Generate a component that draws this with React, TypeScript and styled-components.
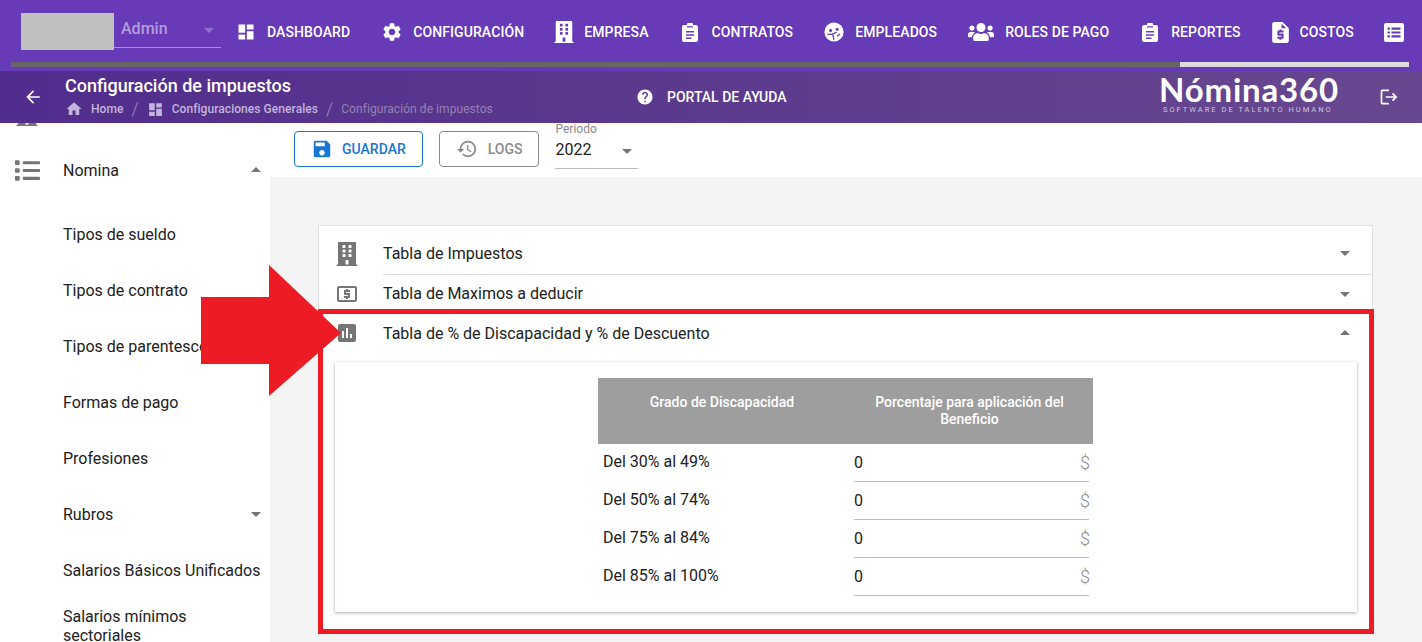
import { createGlobalStyle } from "styled-components";
import styled from "styled-components";
import {
  MdDashboard, MdSettings, MdArrowBack, MdHome, MdHelp, MdSave, MdHistory,
  MdArrowDropDown, MdArrowDropUp, MdLocalAtm, MdAssessment, MdLogout,
  MdRequestQuote,
} from "react-icons/md";
import { FaBuilding, FaUsers, FaList } from "react-icons/fa";

const Global = createGlobalStyle`
  html, body { margin: 0; padding: 0; height: 100%; overflow: hidden; }
  body { font-family: Roboto, "Liberation Sans", sans-serif; color: #212121; background: #fff; }
  * { box-sizing: border-box; }
`;

const Page = styled.div`
  position: relative;
  width: 1422px;
  height: 642px;
  overflow: hidden;
  display: flex;
  flex-direction: column;
`;

const TopBar = styled.header`
  height: 71px;
  flex: none;
  background: #673ab7;
  display: flex;
  flex-direction: column;
`;

const TopRow = styled.div`
  height: 62px;
  padding: 13px 0 0 21px;
  display: flex;
  overflow: hidden;
`;

const LogoBox = styled.div`
  width: 93px;
  height: 37px;
  background: #c0c0c0;
  flex: none;
`;

const RoleSelect = styled.div`
  width: 107px;
  height: 35px;
  flex: none;
  padding: 6px 0 0 7px;
  display: flex;
  justify-content: space-between;
  border-bottom: 1px solid #a88fd8;
  color: #b39ddb;
  font-size: 16px;
  font-weight: 500;
  svg { margin-top: -1px; color: #8e6fcb; }
`;

const Nav = styled.nav`
  display: flex;
  gap: 20px;
  margin-left: 4px;
  height: 37px;
  align-items: center;
`;

const NavItem = styled.a`
  display: flex;
  align-items: center;
  color: #fff;
  font-size: 14px;
  font-weight: 500;
  letter-spacing: 0.1px;
  white-space: nowrap;
  margin-top: 1px;
`;

const NavIcon = styled.span<{ $slot: number }>`
  width: ${(p) => p.$slot}px;
  flex: none;
  display: flex;
  align-items: center;
  justify-content: center;
`;

const Scroll = styled.div`
  height: 5px;
  margin: 0 13px 0 11px;
  background: #dcdcdc;
`;

const ScrollThumb = styled.div`
  width: 1169px;
  height: 5px;
  background: #666;
`;

const SubBar = styled.div`
  height: 52px;
  flex: none;
  background: linear-gradient(90deg, #512d8d 0%, #67488f 100%);
  display: flex;
  align-items: center;
  color: #fff;
  position: relative;
  z-index: 1;
`;

const BackSlot = styled.div`
  width: 65px;
  padding-left: 23px;
  display: flex;
`;

const TitleBlock = styled.div`
  width: 571px;
  display: flex;
  flex-direction: column;
  gap: 2px;
  margin-top: -2px;
`;

const PageTitle = styled.div`
  font-size: 18px;
  font-weight: 500;
  line-height: 24px;
`;

const Crumbs = styled.div`
  display: flex;
  align-items: center;
  font-size: 12px;
  font-weight: 500;
  letter-spacing: 0.06px;
  color: #c2b4da;
  line-height: 16px;
`;

const Crumb = styled.span`
  display: flex;
  align-items: center;
  gap: 8px;
`;

const CrumbSep = styled.span`
  font-size: 18px;
  font-weight: 300;
  color: #9d8abb;
  margin: 0 8px;
`;

const CrumbCurrent = styled.span`
  color: #9482b3;
  font-weight: 400;
`;

const HelpLink = styled.div`
  width: 513px;
  display: flex;
  align-items: center;
  gap: 13px;
  font-size: 14px;
  font-weight: 500;
`;

const Brand = styled.div`
  width: 230px;
  display: flex;
  flex-direction: column;
  padding-left: 10px;
  margin-top: -8px;
`;

const BrandName = styled.div`
  font-family: Lato, sans-serif;
  font-size: 33px;
  font-weight: 700;
  line-height: 32px;
  letter-spacing: 0.8px;
`;

const BrandTag = styled.div`
  font-size: 7.5px;
  letter-spacing: 2px;
  line-height: 9px;
  color: #cfc6de;
  padding-left: 4px;
  white-space: nowrap;
`;

const Body = styled.div`
  flex: 1;
  display: grid;
  grid-template-columns: 270px 1fr;
  min-height: 0;
`;

const Sidebar = styled.aside`
  overflow: hidden;
  background: #fff;
`;

const SideList = styled.div`
  margin-top: -37px;
  display: flex;
  flex-direction: column;
`;

const SideHead = styled.div`
  height: 56px;
  padding: 0 2px 0 15px;
  display: flex;
  align-items: center;
  gap: 23px;
  font-size: 16px;
`;

const SubList = styled.div`
  margin-top: 8px;
  display: flex;
  flex-direction: column;
`;

const SideIcon = styled.span`
  display: flex;
  color: #757575;
`;

const SideGrow = styled.span`
  flex: 1;
`;

const SideItem = styled.div`
  height: 56px;
  padding: 0 2px 0 63px;
  display: flex;
  align-items: center;
  justify-content: space-between;
  font-size: 16px;
  line-height: 19px;
  svg { color: #757575; }
`;

const Main = styled.main`
  display: flex;
  flex-direction: column;
  min-width: 0;
`;

const Toolbar = styled.div`
  height: 54px;
  flex: none;
  background: #fff;
  display: flex;
  align-items: flex-start;
  gap: 16px;
  padding: 8px 0 0 24px;
`;

const OutlineButton = styled.button<{ $primary?: boolean }>`
  height: 36px;
  padding: 0 ${(p) => (p.$primary ? 16 : 15)}px 0 16px;
  border-radius: 4px;
  border: 1px solid ${(p) => (p.$primary ? "#1976d2" : "#8a8a8a")};
  background: #fff;
  color: ${(p) => (p.$primary ? "#1976d2" : "#8a8a8a")};
  font-family: inherit;
  font-size: 14px;
  font-weight: 500;
  display: flex;
  align-items: center;
  gap: ${(p) => (p.$primary ? 9 : 10)}px;
`;

const PeriodField = styled.div`
  width: 83px;
  height: 46px;
  margin-top: -8px;
  padding-left: 1px;
  border-bottom: 1px solid #bdbdbd;
  display: flex;
  flex-direction: column;
`;

const PeriodLabel = styled.div`
  font-size: 12px;
  line-height: 14px;
  color: #8a8a8a;
  margin-top: -1px;
`;

const PeriodValue = styled.div`
  font-size: 16px;
  line-height: 19px;
  margin-top: 4px;
  display: flex;
  justify-content: space-between;
  svg { color: #757575; margin: -1px -1px 0 0; }
`;

const Content = styled.div`
  flex: 1;
  background: #f4f4f4;
  padding: 48px 49px 0 48px;
  overflow: hidden;
  min-height: 0;
`;

const Accordion = styled.section`
  background: #fff;
  border: 1px solid #e0e0e0;
  border-bottom: none;
  height: 405px;
`;

const AccRow = styled.div<{ $h: number }>`
  display: flex;
  align-items: center;
  height: ${(p) => p.$h}px;
  padding-left: 16px;
`;

const AccIcon = styled.span<{ $top?: number }>`
  width: 48px;
  flex: none;
  display: flex;
  color: #757575;
  margin-top: ${(p) => p.$top ?? 0}px;
`;

const AccTitle = styled.div<{ $line?: boolean }>`
  flex: 1;
  align-self: stretch;
  display: flex;
  align-items: center;
  justify-content: space-between;
  padding: ${(p) => (p.$line ? "6px 15px 0 0" : "0 15px 0 0")};
  font-size: 16px;
  border-bottom: ${(p) => (p.$line ? "1px solid #dcdcdc" : "none")};
  svg { color: #757575; }
`;

const Paper = styled.div`
  margin: 8px 15px 0 16px;
  height: 250px;
  background: #fff;
  box-shadow: 0 1px 3px rgba(0, 0, 0, 0.35);
  padding: 16px 0 0 263px;
`;

const Grid = styled.div`
  width: 495px;
`;

const HeadRow = styled.div`
  height: 66px;
  background: #9e9e9e;
  color: #fff;
  font-size: 14px;
  font-weight: 500;
  line-height: 17px;
  text-align: center;
  display: grid;
  grid-template-columns: 248px 247px;
  padding-top: 16px;
`;

const HeadCell = styled.div<{ $pad: number }>`
  padding: 0 ${(p) => p.$pad}px;
`;

const Row = styled.div`
  height: 38px;
  display: grid;
  grid-template-columns: 256px 235px;
`;

const RowLabel = styled.div`
  padding: 8px 0 0 5px;
  font-size: 16px;
  line-height: 19px;
`;

const RowInput = styled.div`
  border-bottom: 1px solid #bdbdbd;
  padding-top: 9px;
  font-size: 16px;
  line-height: 19px;
  display: flex;
  justify-content: space-between;
`;

const Adorn = styled.span`
  font-size: 18px;
  font-weight: 300;
  color: #8a8a8a;
  line-height: 19px;
  margin-right: -1px;
`;

const Highlight = styled.div`
  position: absolute;
  left: 318px;
  top: 309px;
  width: 1056px;
  height: 325px;
  border: 5px solid #ed1c24;
  pointer-events: none;
`;

const ArrowMark = styled.svg`
  position: absolute;
  left: 201px;
  top: 265px;
`;

const ClipboardIcon = () => (
  <svg width="16" height="19" viewBox="0 0 16 19">
    <path d="M2 2h3V1a1 1 0 0 1 1-1h4a1 1 0 0 1 1 1v1h3a2 2 0 0 1 2 2v13a2 2 0 0 1-2 2H2a2 2 0 0 1-2-2V4a2 2 0 0 1 2-2z" fill="#fff" />
    <path d="M5 3.2h6v1.4H5zM4 8h8v1.5H4zM4 11.2h8v1.5H4zM4 14.4h5.5v1.5H4z" fill="#673ab7" />
  </svg>
);

const FaceIcon = () => (
  <svg width="20" height="20" viewBox="0 0 20 20">
    <circle cx="10" cy="10" r="9.6" fill="#fff" />
    <circle cx="6.6" cy="8.4" r="1.5" fill="#673ab7" />
    <circle cx="13.2" cy="7.2" r="1.5" fill="#673ab7" />
    <path d="M3.6 12.2c3 .6 6.4-.2 9-2.2M8.6 11.6l1.4 6.2M13 14.2c1.2-.6 2.2-1.4 3-2.4" fill="none" stroke="#673ab7" strokeWidth="1.3" />
  </svg>
);

const ListBoxIcon = () => (
  <svg width="20" height="19" viewBox="0 0 20 19">
    <rect width="20" height="19" rx="2" fill="#fff" />
    <path d="M3.5 4.5h2.4v2.2H3.5zM7.5 4.5h9v2.2h-9zM3.5 8.4h2.4v2.2H3.5zM7.5 8.4h9v2.2h-9zM3.5 12.3h2.4v2.2H3.5zM7.5 12.3h9v2.2h-9z" fill="#673ab7" />
  </svg>
);

const navItems = [
  { label: "DASHBOARD", slot: 42, icon: <MdDashboard size={20} /> },
  { label: "CONFIGURACIÓN", slot: 43, icon: <MdSettings size={22} /> },
  { label: "EMPRESA", slot: 40, icon: <FaBuilding size={22} /> },
  { label: "CONTRATOS", slot: 43, icon: <ClipboardIcon /> },
  { label: "EMPLEADOS", slot: 42, icon: <FaceIcon /> },
  { label: "ROLES DE PAGO", slot: 48, icon: <FaUsers size={26} /> },
  { label: "REPORTES", slot: 42, icon: <ClipboardIcon /> },
  { label: "COSTOS", slot: 39, icon: <MdRequestQuote size={25} /> },
  { label: "", slot: 40, icon: <ListBoxIcon /> },
];

const sideItems = [
  "Tipos de sueldo",
  "Tipos de contrato",
  "Tipos de parentesco",
  "Formas de pago",
  "Profesiones",
  "Rubros",
  "Salarios Básicos Unificados",
];

const rows = ["Del 30% al 49%", "Del 50% al 74%", "Del 75% al 84%", "Del 85% al 100%"];

export default function App() {
  return (
    <Page>
      <Global />
      <TopBar>
        <TopRow>
          <LogoBox />
          <RoleSelect>
            Admin
            <MdArrowDropDown size={24} />
          </RoleSelect>
          <Nav>
            {navItems.map((item, i) => (
              <NavItem key={i}>
                <NavIcon $slot={item.slot}>{item.icon}</NavIcon>
                {item.label}
              </NavItem>
            ))}
          </Nav>
        </TopRow>
        <Scroll>
          <ScrollThumb />
        </Scroll>
      </TopBar>

      <SubBar>
        <BackSlot>
          <MdArrowBack size={20} />
        </BackSlot>
        <TitleBlock>
          <PageTitle>Configuración de impuestos</PageTitle>
          <Crumbs>
            <Crumb>
              <MdHome size={18} />
              Home
            </Crumb>
            <CrumbSep>/</CrumbSep>
            <Crumb>
              <MdDashboard size={17} />
              Configuraciones Generales
            </Crumb>
            <CrumbSep>/</CrumbSep>
            <CrumbCurrent>Configuración de impuestos</CrumbCurrent>
          </Crumbs>
        </TitleBlock>
        <HelpLink>
          <MdHelp size={18} />
          PORTAL DE AYUDA
        </HelpLink>
        <Brand>
          <BrandName>Nómina360</BrandName>
          <BrandTag>SOFTWARE DE TALENTO HUMANO</BrandTag>
        </Brand>
        <MdLogout size={20} />
      </SubBar>

      <Body>
        <Sidebar>
          <SideList>
            <SideHead>
              <SideIcon>
                <FaBuilding size={24} />
              </SideIcon>
            </SideHead>
            <SideHead>
              <SideIcon>
                <FaList size={25} />
              </SideIcon>
              <SideGrow>Nomina</SideGrow>
              <SideIcon>
                <MdArrowDropUp size={24} />
              </SideIcon>
            </SideHead>
            <SubList>
              {sideItems.map((label) => (
                <SideItem key={label}>
                  {label}
                  {label === "Rubros" && <MdArrowDropDown size={24} />}
                </SideItem>
              ))}
              <SideItem>Salarios mínimos sectoriales</SideItem>
            </SubList>
          </SideList>
        </Sidebar>

        <Main>
          <Toolbar>
            <OutlineButton $primary>
              <MdSave size={22} />
              GUARDAR
            </OutlineButton>
            <OutlineButton>
              <MdHistory size={22} />
              LOGS
            </OutlineButton>
            <PeriodField>
              <PeriodLabel>Periodo</PeriodLabel>
              <PeriodValue>
                2022
                <MdArrowDropDown size={24} />
              </PeriodValue>
            </PeriodField>
          </Toolbar>
          <Content>
            <Accordion>
              <AccRow $h={49}>
                <AccIcon $top={6}>
                  <FaBuilding size={24} />
                </AccIcon>
                <AccTitle $line>
                  Tabla de Impuestos
                  <MdArrowDropDown size={24} />
                </AccTitle>
              </AccRow>
              <AccRow $h={37}>
                <AccIcon>
                  <MdLocalAtm size={24} />
                </AccIcon>
                <AccTitle>
                  Tabla de Maximos a deducir
                  <MdArrowDropDown size={24} />
                </AccTitle>
              </AccRow>
              <AccRow $h={42}>
                <AccIcon>
                  <MdAssessment size={24} />
                </AccIcon>
                <AccTitle>
                  Tabla de % de Discapacidad y % de Descuento
                  <MdArrowDropUp size={24} />
                </AccTitle>
              </AccRow>
              <Paper>
                <Grid>
                  <HeadRow>
                    <HeadCell $pad={30}>Grado de Discapacidad</HeadCell>
                    <HeadCell $pad={20}>Porcentaje para aplicación del Beneficio</HeadCell>
                  </HeadRow>
                  {rows.map((label) => (
                    <Row key={label}>
                      <RowLabel>{label}</RowLabel>
                      <RowInput>
                        0
                        <Adorn>$</Adorn>
                      </RowInput>
                    </Row>
                  ))}
                </Grid>
              </Paper>
            </Accordion>
          </Content>
        </Main>
      </Body>

      <Highlight />
      <ArrowMark width="141" height="133" viewBox="0 0 141 133">
        <polygon points="0,32 68,32 68,0 140,68 68,131 68,99 0,99" fill="#ed1c24" />
      </ArrowMark>
    </Page>
  );
}
